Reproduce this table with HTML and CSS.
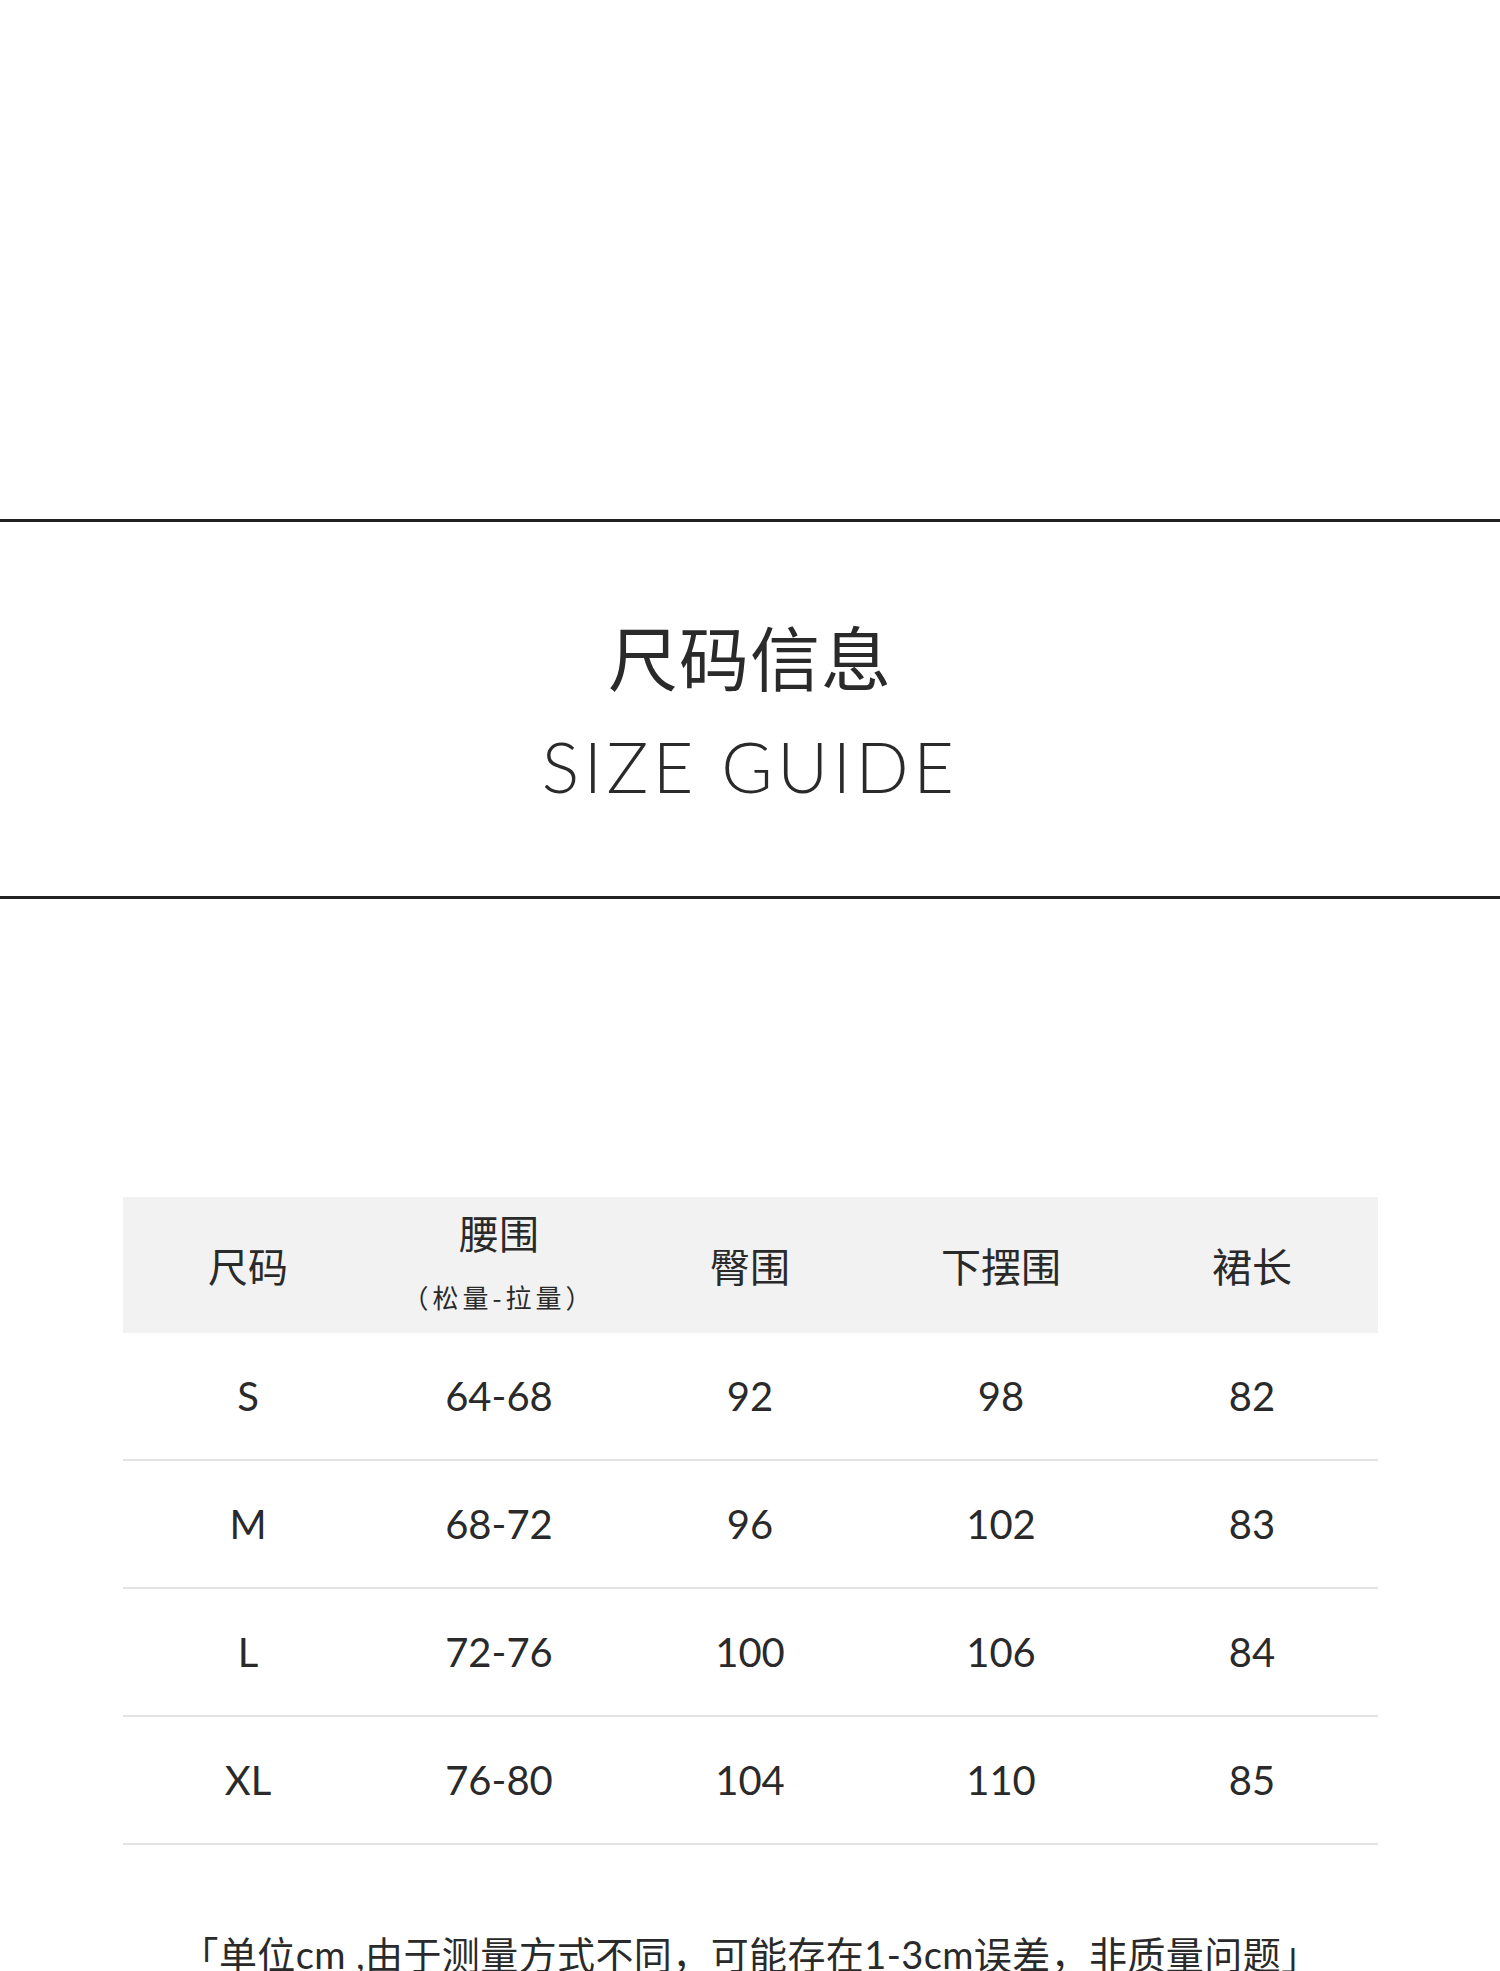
FILE: index.html
```html
<!DOCTYPE html>
<html lang="zh-CN">
<head>
<meta charset="utf-8">
<title>尺码信息 SIZE GUIDE</title>
<link rel="stylesheet" href="styles.css">
</head>
<body>
<div class="page">
  <div class="top-blank"></div>
  <section class="title-band">
    <h1 class="title-cn">尺码信息</h1>
    <h2 class="title-en">SIZE GUIDE</h2>
  </section>
  <div class="mid-blank"></div>
  <table class="size-table">
    <thead>
      <tr>
        <th>尺码</th>
        <th><span class="th-main">腰围</span><span class="th-sub">（松量-拉量）</span></th>
        <th>臀围</th>
        <th>下摆围</th>
        <th>裙长</th>
      </tr>
    </thead>
    <tbody>
      <tr><td>S</td><td>64-68</td><td>92</td><td>98</td><td>82</td></tr>
      <tr><td>M</td><td>68-72</td><td>96</td><td>102</td><td>83</td></tr>
      <tr><td>L</td><td>72-76</td><td>100</td><td>106</td><td>84</td></tr>
      <tr><td>XL</td><td>76-80</td><td>104</td><td>110</td><td>85</td></tr>
    </tbody>
  </table>
  <p class="note">「单位cm ,由于测量方式不同，可能存在1-3cm误差，非质量问题」</p>
</div>
</body>
</html>
```

FILE: styles.css
```css
html, body {
  margin: 0;
  padding: 0;
  background: #ffffff;
}
body {
  font-family: "Noto Sans CJK SC", "Noto Sans", sans-serif;
  color: #2a2a2a;
  text-spacing-trim: space-all;
}
.page {
  width: 1500px;
  height: 1971px;
  overflow: hidden;
}
.top-blank {
  height: 519px;
}
.title-band {
  height: 374px;
  border-top: 3px solid #222222;
  border-bottom: 3px solid #222222;
  display: flex;
  flex-direction: column;
  align-items: center;
  justify-content: center;
}
.title-cn {
  margin: 0;
  font-family: "Noto Sans CJK SC", sans-serif;
  font-weight: 400;
  font-size: 70px;
  line-height: 80px;
  letter-spacing: 1px;
  color: #2a2a2a;
}
.title-en {
  margin: 34px 0 0;
  font-family: "Lato", "Noto Sans", sans-serif;
  font-weight: 300;
  font-size: 70px;
  line-height: 72px;
  letter-spacing: 4.5px;
  color: #2a2a2a;
}
.mid-blank {
  height: 298px;
}
.size-table {
  width: 1255px;
  margin: 0 auto;
  border-collapse: collapse;
  table-layout: fixed;
}
.size-table th {
  height: 136px;
  padding: 0;
  background: #f2f2f2;
  font-weight: 400;
  font-size: 40px;
  color: #2a2a2a;
  vertical-align: middle;
  text-align: center;
}
.th-main {
  display: block;
  line-height: 44px;
}
.th-sub {
  display: block;
  font-size: 26px;
  line-height: 30px;
  letter-spacing: 4px;
  margin-top: 28px;
  margin-bottom: 8px;
}
.size-table td {
  height: 126px;
  padding: 0;
  border-bottom: 2px solid #e4e4e4;
  text-align: center;
  vertical-align: middle;
  font-family: "Lato", "Noto Sans", sans-serif;
  font-size: 40px;
  color: #2a2a2a;
}
.note {
  margin: 84px 0 0;
  text-align: center;
  font-family: "Lato", "Noto Sans CJK SC", sans-serif;
  font-size: 38px;
  line-height: 50px;
  letter-spacing: 0.4px;
  color: #2a2a2a;
}
```
